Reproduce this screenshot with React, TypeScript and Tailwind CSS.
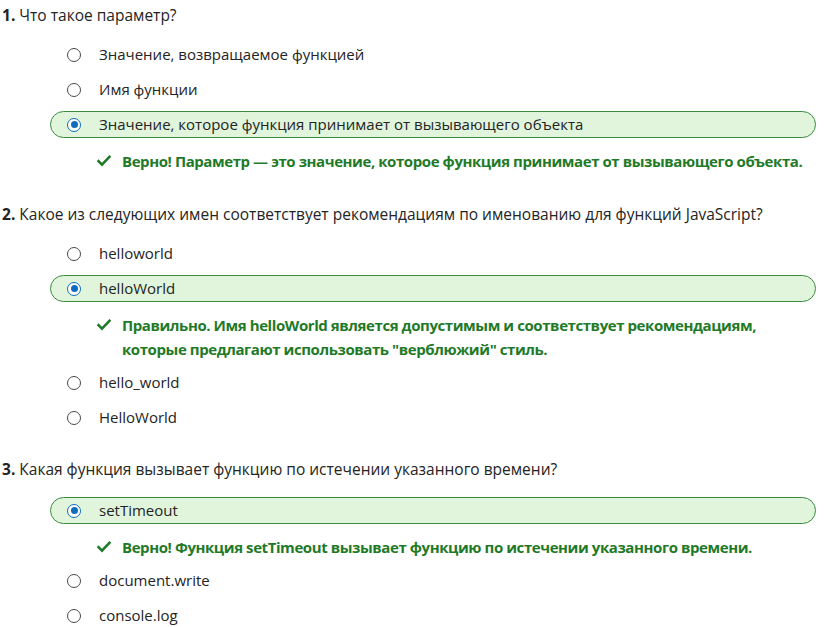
import React from 'react';

type Option = {
    label: string;
    selected?: boolean;
    feedback?: string[];
};

type Question = {
    num: number;
    title: string;
    mt: string;
    mb: string;
    options: Option[];
};

const questions: Question[] = [
    {
        num: 1,
        title: 'Что такое параметр?',
        mt: 'mt-[3px]',
        mb: 'mb-[10px]',
        options: [
            { label: 'Значение, возвращаемое функцией' },
            { label: 'Имя функции' },
            {
                label: 'Значение, которое функция принимает от вызывающего объекта',
                selected: true,
                feedback: ['Верно! Параметр — это значение, которое функция принимает от вызывающего объекта.'],
            },
        ],
    },
    {
        num: 2,
        title: 'Какое из следующих имен соответствует рекомендациям по именованию для функций JavaScript?',
        mt: 'mt-[25px]',
        mb: 'mb-[10px]',
        options: [
            { label: 'helloworld' },
            {
                label: 'helloWorld',
                selected: true,
                feedback: [
                    'Правильно. Имя helloWorld является допустимым и соответствует рекомендациям,',
                    'которые предлагают использовать "верблюжий" стиль.',
                ],
            },
            { label: 'hello_world' },
            { label: 'HelloWorld' },
        ],
    },
    {
        num: 3,
        title: 'Какая функция вызывает функцию по истечении указанного времени?',
        mt: 'mt-[22px]',
        mb: 'mb-[12px]',
        options: [
            {
                label: 'setTimeout',
                selected: true,
                feedback: ['Верно! Функция setTimeout вызывает функцию по истечении указанного времени.'],
            },
            { label: 'document.write' },
            { label: 'console.log' },
        ],
    },
];

const Radio = ({ checked }: { checked?: boolean }) =>
    checked ? (
        <span className="w-[14px] h-[14px] rounded-full border border-[#0f6cbd] bg-white flex items-center justify-center shrink-0">
            <span className="w-[7px] h-[7px] rounded-full bg-[#0f6cbd]" />
        </span>
    ) : (
        <span className="w-[14px] h-[14px] rounded-full border border-[#4a4a4a] bg-white shrink-0" />
    );

const Check = () => (
    <svg width="14" height="12" viewBox="0 0 14 12" className="shrink-0 mt-[6px]">
        <path d="M1.5 6.2 L5 9.6 L12.5 1.8" fill="none" stroke="#1f7a28" strokeWidth="2.6" strokeLinecap="square" />
    </svg>
);

const OptionRow = ({ option }: { option: Option }) => (
    <>
        <div className="h-[35px] flex items-center">
            <div
                className={`flex items-center h-[27px] w-[766px] ml-[48px] pl-[16px] rounded-full border ${
                    option.selected ? 'border-[#3b8b3f] bg-[#e0f5dc]' : 'border-transparent'
                }`}
            >
                <Radio checked={option.selected} />
                <span className="ml-[18px] text-[#242424]">{option.label}</span>
            </div>
        </div>
        {option.feedback && (
            <div className="flex items-start gap-[11px] pl-[95px] pt-[7px] pb-[4px]">
                <Check />
                <div className="font-bold tracking-[-0.42px] text-[#1f7a28] leading-[24px] whitespace-nowrap">
                    {option.feedback.map((line) => (
                        <div key={line}>{line}</div>
                    ))}
                </div>
            </div>
        )}
    </>
);

export default function App() {
    return (
        <div className="w-[832px] h-[627px] overflow-hidden bg-white px-[2px] text-[15px] text-[#242424] font-['Open_Sans',sans-serif]">
            {questions.map((q) => (
                <section key={q.num}>
                    <div className={`${q.mt} ${q.mb} text-[15.5px] leading-[24px]`}>
                        <span className="font-bold">{q.num}.</span> {q.title}
                    </div>
                    {q.options.map((o) => (
                        <OptionRow key={o.label} option={o} />
                    ))}
                </section>
            ))}
        </div>
    );
}
